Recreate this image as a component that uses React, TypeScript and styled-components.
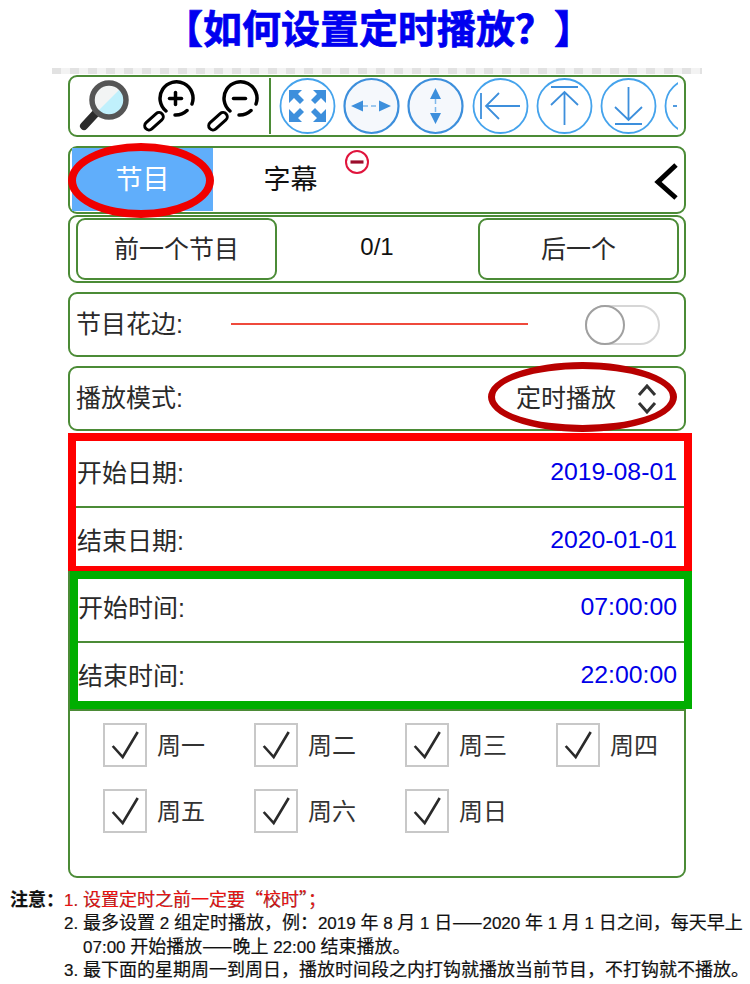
import styled, { createGlobalStyle } from 'styled-components'

const GlobalStyle = createGlobalStyle`
  html, body {
    margin: 0;
    padding: 0;
    background: #fff;
  }
`

const CJK = `"Liberation Sans", "Noto Sans CJK SC", sans-serif`
const GREEN = '#4b8b36'
const BLUE = '#45a3ec'
const ICON = '#3d8fdc'

const Page = styled.div`
  position: relative;
  width: 750px;
  height: 984px;
  overflow: hidden;
  font-family: ${CJK};
  color: #2a2a2a;
`

const Title = styled.h1`
  margin: 0;
  height: 68px;
  padding: 0 0 9px 7px;
  box-sizing: border-box;
  display: flex;
  align-items: center;
  justify-content: center;
  font-size: 39px;
  line-height: 1;
  font-weight: 700;
  color: #0000f0;
  font-family: ${CJK};
  -webkit-text-stroke: 0.7px #0000f0;
`

const Strip = styled.div`
  height: 6px;
  margin: 0 48px 0 52px;
  background: repeating-linear-gradient(90deg, #e2e2e2 0 9px, #f3f3f3 9px 18px);
`

const Panel = styled.div`
  padding-left: 68px;
  width: 618px;
`

const Card = styled.div<{ $top: number; $height: number }>`
  position: relative;
  box-sizing: border-box;
  width: 618px;
  height: ${(p) => p.$height}px;
  margin-top: ${(p) => p.$top}px;
  border: 2px solid ${GREEN};
  border-radius: 9px;
  background: #fff;
  display: flex;
  align-items: center;
`

const Toolbar = styled(Card)`
  padding-left: 8px;
`

const ToolStrip = styled.div`
  display: flex;
  align-items: center;
  width: 600px;
  overflow: hidden;
`

const Tool = styled.svg`
  flex: none;
  width: 54px;
  height: 56px;
  margin-right: 10px;
`

const Divider = styled.div`
  flex: none;
  width: 2px;
  height: 56px;
  background: ${GREEN};
  margin: 0 8px 0 -1px;
`

const RoundTool = styled.svg`
  flex: none;
  width: 58px;
  height: 58px;
  margin-right: 6.2px;
`

const TabActive = styled.div`
  align-self: stretch;
  margin: 0 0 1px 2px;
  padding-bottom: 5px;
  width: 141px;
  box-sizing: border-box;
  background: #60aefb;
  color: #fff;
  font-size: 27px;
  display: flex;
  align-items: center;
  justify-content: center;
`

const Tab = styled.div`
  width: 155px;
  padding-bottom: 5px;
  font-size: 27px;
  color: #111;
  text-align: center;
`

const Chevron = styled.svg`
  position: absolute;
  right: 6px;
  top: 15px;
  width: 24px;
  height: 38px;
`

const Badge = styled.svg`
  position: absolute;
  left: 274px;
  top: 1px;
  width: 26px;
  height: 26px;
`

const PagerRow = styled(Card)`
  justify-content: space-between;
  padding: 0 5px 0 6px;
`

const PagerButton = styled.div<{ $width: number }>`
  box-sizing: border-box;
  width: ${(p) => p.$width}px;
  height: 62px;
  padding-bottom: 5px;
  border: 2px solid ${GREEN};
  border-radius: 9px;
  font-size: 25px;
  display: flex;
  align-items: center;
  justify-content: center;
`

const Counter = styled.span`
  font-size: 24px;
  color: #111;
  margin: -4px 0 0 -1px;
`

const Label = styled.span`
  font-size: 25px;
`

const SettingRow = styled(Card)`
  padding-left: 6px;
  justify-content: space-between;
`

const RowLabel = styled(Label)`
  margin-bottom: 6px;
`

const BorderLine = styled.div`
  position: absolute;
  left: 161px;
  top: 29px;
  width: 297px;
  height: 2px;
  background: #ef4a3c;
`

const Toggle = styled.div`
  position: relative;
  box-sizing: border-box;
  width: 75px;
  height: 40px;
  margin: 0 24px 0 0;
  border: 2px solid #d6d6d6;
  border-radius: 20px;
`

const ToggleKnob = styled.div`
  position: absolute;
  left: -2px;
  top: -2px;
  box-sizing: border-box;
  width: 40px;
  height: 40px;
  border: 2px solid #a0a0a0;
  border-radius: 50%;
  background: #fff;
`

const SelectValue = styled.div`
  display: flex;
  align-items: center;
  gap: 21px;
  margin-right: 27px;
  font-size: 25px;
`

const SelectText = styled.span`
  margin-bottom: 6px;
`

const Frame = styled.div<{ $color: string; $width: number; $height: number; $bottom: number }>`
  box-sizing: border-box;
  width: ${(p) => p.$width}px;
  height: ${(p) => p.$height}px;
  border: 8px solid ${(p) => p.$color};
  border-bottom-width: ${(p) => p.$bottom}px;
  background: #fff;
`

const RedSlot = styled.div`
  margin: 2px 0 0 68px;
`

const GreenSlot = styled.div`
  margin-left: 68px;
  width: 624px;
  box-sizing: border-box;
  border-left: 2px solid ${GREEN};
`

const FrameRow = styled.div<{ $line?: boolean; $height: number; $up: number; $left: number }>`
  height: ${(p) => p.$height}px;
  box-sizing: border-box;
  display: flex;
  align-items: center;
  justify-content: space-between;
  padding: 0 7px ${(p) => p.$up}px ${(p) => p.$left}px;
  border-bottom: ${(p) => (p.$line ? `2px solid ${GREEN}` : 'none')};
`

const Value = styled.span`
  font-size: 24.8px;
  margin-top: 2px;
  color: #0000e8;
`

const DaysCard = styled.div`
  box-sizing: border-box;
  width: 618px;
  height: 169px;
  border: 2px solid ${GREEN};
  border-radius: 0 0 9px 9px;
  padding: 12px 0 0 33px;
  display: grid;
  grid-template-columns: repeat(4, 151px);
  grid-auto-rows: 44px;
  row-gap: 22px;
`

const Day = styled.div`
  display: flex;
  align-items: center;
  gap: 10px;
  font-size: 24px;
  color: #333;
`

const DayName = styled.span`
  margin-bottom: 4px;
`

const CheckBox = styled.div`
  box-sizing: border-box;
  width: 44px;
  height: 44px;
  border: 2px solid #c8c8c8;
`

const Notes = styled.div`
  display: grid;
  grid-template-columns: 54px 19px 1fr;
  grid-auto-rows: 23.3px;
  padding: 9px 0 0 10px;
  font-family: "Noto Sans CJK SC", sans-serif;
  font-size: 18px;
  line-height: 23.3px;
  color: #111;
  -webkit-text-stroke: 0.2px #111;
  white-space: nowrap;
`

const NoteLabel = styled.span`
  font-weight: 700;
`

const NoteNum = styled.span<{ $red?: boolean }>`
  grid-column: 2;
  color: ${(p) => (p.$red ? '#f01010' : 'inherit')};
`

const NoteText = styled.span<{ $red?: boolean }>`
  grid-column: 3;
  color: ${(p) => (p.$red ? '#f01010' : 'inherit')};
`

// digits of the note text, set smaller than the Chinese around them
const Narrow = styled.span`
  white-space: pre;
  font-family: "Liberation Sans", sans-serif;
  font-size: 17px;
  line-height: 1;
`

const Ring = styled.div<{ $color: string; $x: number; $y: number; $w: number; $h: number; $b: number }>`
  position: absolute;
  box-sizing: border-box;
  left: ${(p) => p.$x}px;
  top: ${(p) => p.$y}px;
  width: ${(p) => p.$w}px;
  height: ${(p) => p.$h}px;
  border: ${(p) => p.$b}px solid ${(p) => p.$color};
  border-radius: 50%;
`

const Circle = ({ soft }: { soft?: boolean }) => (
  <circle
    cx='28.5'
    cy='29'
    r='27'
    fill={soft ? '#f5f8fc' : '#fff'}
    stroke={soft ? ICON : BLUE}
    strokeWidth={soft ? 2.2 : 1.8}
  />
)

const Lens = ({ plus }: { plus?: boolean }) => (
  <Tool viewBox='0 0 54 56'>
    <path
      d='M24 33 A16.5 16.5 0 1 1 50 26 M45 32.5 A16.5 16.5 0 0 1 33 37'
      fill='none'
      stroke='#000'
      strokeWidth='3.5'
      strokeLinecap='round'
    />
    <path d='M27.5 20.5 H39.5' stroke='#000' strokeWidth='3.5' strokeLinecap='round' />
    {plus && <path d='M33.5 14.5 V26.5' stroke='#000' strokeWidth='3.5' strokeLinecap='round' />}
    <rect x='1' y='39' width='22' height='8.5' rx='4.25' fill='none' stroke='#000' strokeWidth='3' transform='rotate(-42 12 43.25)' />
  </Tool>
)

const EXPAND_ARROW = 'M10 13 L23 13 L19 17 L25 23 L21 27 L15 21 L10 26 Z'

const weekdays = ['周一', '周二', '周三', '周四', '周五', '周六', '周日']

const App = () => {
  return (
    <Page>
      <GlobalStyle />
      <Title>【如何设置定时播放？】</Title>
      <Strip />
      <Panel>
        <Toolbar $top={1} $height={62}>
          <ToolStrip>
            <Tool viewBox='0 0 54 56'>
              <path d='M6 48 L18 35' stroke='#2c2c2c' strokeWidth='8' strokeLinecap='round' />
              <circle cx='31' cy='22' r='17' fill='#c0f0fc' />
              <path d='M43 10 A17 17 0 0 0 19 34 Z' fill='#f2f4f4' />
              <circle cx='31' cy='22' r='17' fill='none' stroke='#555' strokeWidth='5.5' />
            </Tool>
            <Lens plus />
            <Lens />
            <Divider />
            <RoundTool viewBox='0 0 58 58'>
              <Circle />
              <g fill={ICON}>
                <path d={EXPAND_ARROW} />
                <path d={EXPAND_ARROW} transform='matrix(-1 0 0 1 57 0)' />
                <path d={EXPAND_ARROW} transform='matrix(1 0 0 -1 0 58)' />
                <path d={EXPAND_ARROW} transform='matrix(-1 0 0 -1 57 58)' />
              </g>
            </RoundTool>
            <RoundTool viewBox='0 0 58 58'>
              <Circle soft />
              <path d='M8 29 L20 23.5 V34.5 Z M48 29 L36 23.5 V34.5 Z' fill={ICON} />
              <path d='M20 29 H36' stroke='#7fb8ea' strokeWidth='1.5' strokeDasharray='5 3' />
            </RoundTool>
            <RoundTool viewBox='0 0 58 58'>
              <Circle soft />
              <path d='M28.5 11 L23 22 H34 Z M28.5 47 L23 36 H34 Z' fill={ICON} />
              <path d='M28.5 22 V36' stroke='#7fb8ea' strokeWidth='1.5' strokeDasharray='5 3' />
            </RoundTool>
            <RoundTool viewBox='0 0 58 58'>
              <Circle />
              <path d='M9 16 V42 M15 29 H48 M27 16 L14 29 L27 42' fill='none' stroke={ICON} strokeWidth='1.8' />
            </RoundTool>
            <RoundTool viewBox='0 0 58 58'>
              <Circle />
              <path d='M15 10 H42 M28.5 16 V48 M15 28 L28.5 15 L42 28' fill='none' stroke={ICON} strokeWidth='1.8' />
            </RoundTool>
            <RoundTool viewBox='0 0 58 58'>
              <Circle />
              <path d='M15 47 H42 M28.5 10 V42 M15 30 L28.5 43 L42 30' fill='none' stroke={ICON} strokeWidth='1.8' />
            </RoundTool>
            <RoundTool viewBox='0 0 58 58'>
              <Circle />
              <path d='M9 29 H13' stroke={ICON} strokeWidth='1.8' />
            </RoundTool>
          </ToolStrip>
        </Toolbar>

        <Card $top={9} $height={68}>
          <TabActive>节目</TabActive>
          <Tab>字幕</Tab>
          <Badge viewBox='0 0 26 26'>
            <circle cx='13' cy='13' r='11' fill='#fff' stroke='#e0143c' strokeWidth='2' />
            <path d='M6.5 13 H19.5' stroke='#9c0d2c' strokeWidth='3.2' />
          </Badge>
          <Chevron viewBox='0 0 24 38'>
            <path d='M22 2 L4 19 L22 35' fill='none' stroke='#000' strokeWidth='5' />
          </Chevron>
        </Card>

        <PagerRow $top={1} $height={68}>
          <PagerButton $width={201}>前一个节目</PagerButton>
          <Counter>0/1</Counter>
          <PagerButton $width={201}>后一个</PagerButton>
        </PagerRow>

        <SettingRow $top={9} $height={65}>
          <RowLabel>节目花边:</RowLabel>
          <BorderLine />
          <Toggle>
            <ToggleKnob />
          </Toggle>
        </SettingRow>

        <SettingRow $top={9} $height={65}>
          <RowLabel>播放模式:</RowLabel>
          <SelectValue>
            <SelectText>定时播放</SelectText>
            <svg width='20' height='30' viewBox='0 0 20 30'>
              <path d='M2 11 L10 2 L18 11 M2 19 L10 28 L18 19' fill='none' stroke='#333' strokeWidth='3' />
            </svg>
          </SelectValue>
        </SettingRow>
      </Panel>

      <RedSlot>
        <Frame $color='#ff0000' $width={624} $height={138} $bottom={5}>
          <FrameRow $line $height={67} $up={6} $left={1}>
            <Label>开始日期:</Label>
            <Value>2019-08-01</Value>
          </FrameRow>
          <FrameRow $height={66} $up={4} $left={1}>
            <Label>结束日期:</Label>
            <Value>2020-01-01</Value>
          </FrameRow>
        </Frame>
      </RedSlot>
      <GreenSlot>
        <Frame $color='#00ae00' $width={622} $height={138} $bottom={8}>
          <FrameRow $line $height={64} $up={8} $left={0}>
            <Label>开始时间:</Label>
            <Value>07:00:00</Value>
          </FrameRow>
          <FrameRow $height={66} $up={4} $left={0}>
            <Label>结束时间:</Label>
            <Value>22:00:00</Value>
          </FrameRow>
        </Frame>
      </GreenSlot>

      <Panel>
        <DaysCard>
          {weekdays.map((day) => (
            <Day key={day}>
              <CheckBox>
                <svg width='40' height='40' viewBox='0 0 40 40'>
                  <path d='M7.7 21 L17.7 32 L32.7 7' fill='none' stroke='#2a2a2a' strokeWidth='2.6' />
                </svg>
              </CheckBox>
              <DayName>{day}</DayName>
            </Day>
          ))}
        </DaysCard>
      </Panel>

      <Notes>
        <NoteLabel>注意：</NoteLabel>
        <NoteNum $red><Narrow>1.</Narrow></NoteNum>
        <NoteText $red>设置定时之前一定要“校时”；</NoteText>
        <NoteNum><Narrow>2.</Narrow></NoteNum>
        <NoteText>
          最多设置<Narrow> 2 </Narrow>组定时播放，例：<Narrow>2019 </Narrow>年<Narrow> 8 </Narrow>月<Narrow> 1 </Narrow>日——<Narrow>2020 </Narrow>年<Narrow> 1 </Narrow>月<Narrow> 1 </Narrow>日之间，每天早上
        </NoteText>
        <NoteText>
          <Narrow>07:00 </Narrow>开始播放——晚上<Narrow> 22:00 </Narrow>结束播放。
        </NoteText>
        <NoteNum><Narrow>3.</Narrow></NoteNum>
        <NoteText>最下面的星期周一到周日，播放时间段之内打钩就播放当前节目，不打钩就不播放。</NoteText>
      </Notes>

      <Ring $color='#f00000' $x={68} $y={143} $w={146} $h={75} $b={8} />
      <Ring $color='#b80000' $x={488} $y={362} $w={189} $h={70} $b={7} />
    </Page>
  )
}

export default App
